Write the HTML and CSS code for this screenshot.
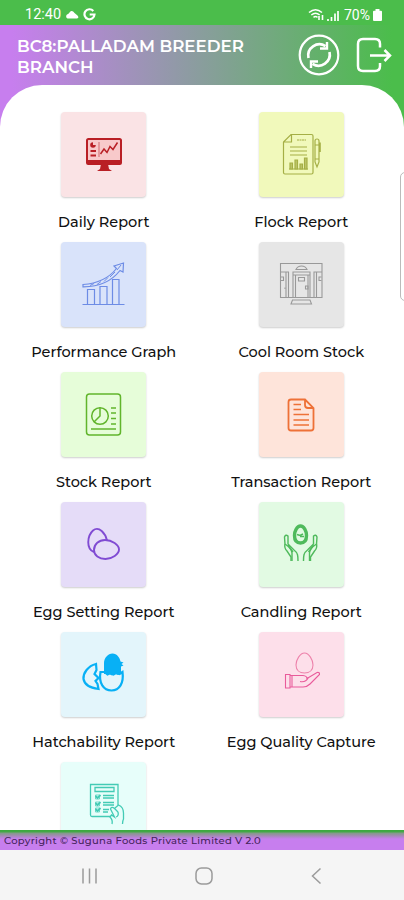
FILE: index.html
```html
<!DOCTYPE html>
<html lang="en">
<head>
	<title>Breeder Reports</title>
	<meta charset="utf-8">
	<meta name="viewport" content="width=device-width, initial-scale=1.0">
	<link rel="stylesheet" href="styles.css">
</head>
<body>
	<div class="screen">

		<div class="status-bar">
			<span class="time">12:40</span>
			<svg class="cloud" width="14" height="9" viewBox="0 0 14 9"><path d="M2.500 8.500a2.300 2.300 0 0 1 0-4.200Q4 3.500 4.500 2.500 7-.5 9.500 3l3 2.500Q14.500 8 12 8.500z" fill="#fff"/></svg>
			<svg class="google" width="13" height="13" viewBox="0 0 13 13"><path d="M10.300 3A5 5 0 1 0 11.500 6.500H6.700" fill="none" stroke="#fff" stroke-width="2.200"/></svg>
			<svg class="signal" width="32" height="14" viewBox="0 0 32 14" fill="none" stroke="#fff" stroke-width="1.500">
				<path d="M1 4.500Q7.500-1 14 4.500M3.300 7Q7.500 3.500 11.700 7M5.500 9.300Q7.500 7.800 9.500 9.300"/>
				<path d="M11 12V8M14.500 7v5" stroke-width="1.600"/>
				<path d="M20 13v-2M23.500 13V9M27 13V5.500M30 13V3" stroke-width="1.700"/>
			</svg>
			<span class="percent">70%</span>
			<svg class="battery" width="9" height="12" viewBox="0 0 9 12"><path d="M2.500 0h4v1.700H8q1 0 1 1V11q0 1-1 1H1q-1 0-1-1V2.700q0-1 1-1h1.500z" fill="#fff"/></svg>
		</div>

		<div class="main">
			<div class="header">
				<h1 class="title">BC8:PALLADAM BREEDER BRANCH</h1>
				<svg class="refresh" width="42" height="42" viewBox="0 0 42 42" fill="none" stroke="#fff" stroke-width="2.200">
					<circle cx="21" cy="21" r="19.300"/>
					<path d="M10.500 24A11.200 11.200 0 0 1 27.500 12.200M31.500 18A11.200 11.200 0 0 1 14.500 29.800" stroke-width="2.700"/>
					<path d="M29 8v6.500h-7M13 34v-6.500h7" stroke-width="2.400"/>
				</svg>
				<svg class="logout" width="36" height="36" viewBox="0 0 36 36" fill="none" stroke="#fff" stroke-width="2.500">
					<path d="M24 10.500V7q0-5-5-5H7Q2 2 2 7v22q0 5 5 5h12q5 0 5-5v-3"/>
					<path d="M14 18.500h19M28.500 13l5.500 5.500-5.500 5.500"/>
				</svg>
			</div>

			<div class="panel">
				<div class="grid">

					<a class="item">
						<div class="tile daily">
							<svg viewBox="0 0 85 85">
								<rect x="26" y="27" width="34" height="25" rx="1.500" fill="#f8c9ca" stroke="#b91f25" stroke-width="2"/>
								<path d="M26 48h34v3q0 1.500-1.500 1.500h-31Q26 52.500 26 51zM40 52h7l1 5 3 2H36l3-2z" fill="#b91f25"/>
								<circle cx="32" cy="33" r="2.800" fill="#b91f25"/>
								<path d="M32 33V30h3v3z" fill="#f8c9ca"/>
								<path d="M29.500 39H35M29.500 43.500H35" stroke="#b91f25" stroke-width="2"/>
								<path d="M38 30v15" stroke="#cf686c" stroke-width="1"/>
								<path d="M39.500 42l3.500-5 3 3.500 3-6 3 3 4.500-7" stroke="#b91f25" stroke-width="1.500" fill="none"/>
							</svg>
						</div>
						<span class="label">Daily Report</span>
					</a>

					<a class="item">
						<div class="tile flock">
							<svg viewBox="0 0 85 85" fill="none" stroke="#a5af45" stroke-width="1.200">
								<path d="M32 22.500H52.500q1.500 0 1.500 1.500v36.500q0 1.500-1.500 1.500H26q-1.500 0-1.500-1.500V30zM32.500 22.500V30H24.500"/>
								<path d="M38 28h9" stroke-dasharray="2 .5"/>
								<path d="M31 35h17M31 39h17M31 43h17"/>
								<path d="M30 57h19"/>
								<path d="M31 51h2.500v6H31zM36 48h2.500v9H36zM41 52h2.500v5H41zM45.500 46H48v11h-2.500z" fill="#bdc56a"/>
								<path d="M56 29q0-2 2-2t2 2v21l-2 5-2-5zM56 33h4M56 47h4M60 31h1.200v9"/>
							</svg>
						</div>
						<span class="label">Flock Report</span>
					</a>

					<a class="item">
						<div class="tile performance">
							<svg viewBox="0 0 85 85" fill="none" stroke="#6d8ce5" stroke-width="1.200">
								<path d="M21.500 62.500h42"/>
								<path d="M26.500 62V47.500h7V62M39 62V44.500h7V62M51.500 62V37.500H58V62"/>
								<path d="M22 42.500Q44 41 55.500 26.500L53 24l9.500-3-.5 9-3-1.500Q46 45 22 44.800z"/>
								<path d="M29 43.500l4-2M36 42.500l4-3M43 39.500l4-4M49 35l5-5M56 28l4-5" stroke-width="1"/>
							</svg>
						</div>
						<span class="label">Performance Graph</span>
					</a>

					<a class="item">
						<div class="tile cool">
							<svg viewBox="0 0 85 85" fill="none" stroke="#999" stroke-width="1.100">
								<path d="M21.500 21.500h41.500v34H21.500zM21.500 30h8v25.500M63 30h-8v25.500M27 30v25M57.500 30v25"/>
								<path d="M34 55.500V30h17v25.500M36.500 55V33H49v22M34 30h17v3H34z"/>
								<path d="M37 27.500q1.500-3.500 5.500-3.500t5.500 3.500z"/>
								<path d="M39.500 35.500h6v3.500h-6zM46.500 44H49v3h-2.500zM22 35h2.500v3.500H22M62.500 35H60v3.500h2.500M26 45.500v1.500"/>
								<path d="M33.500 58H51l1.500 4H32z"/>
							</svg>
						</div>
						<span class="label">Cool Room Stock</span>
					</a>

					<a class="item">
						<div class="tile stock">
							<svg viewBox="0 0 85 85" fill="none" stroke="#61b52c" stroke-width="1.500">
								<rect x="25.500" y="22" width="34" height="41" rx="3"/>
								<circle cx="39" cy="44" r="8.300"/>
								<path d="M39 35.500V44l-6 6"/>
								<path d="M50 36h5M50 41h5M50 46.500h5M50 52h5M30 57h25"/>
							</svg>
						</div>
						<span class="label">Stock Report</span>
					</a>

					<a class="item">
						<div class="tile transaction">
							<svg viewBox="0 0 85 85" fill="none" stroke="#ee7137" stroke-width="1.800">
								<path d="M46 27.500H32q-2.500 0-2.500 2.500v26q0 2.500 2.500 2.500h20q2.500 0 2.500-2.500V36zM46 27.500V33q0 3 3 3h5.500"/>
								<path d="M34.500 32.500H42M34.500 37.500H42M34.500 42.500h15.500M34.500 48h15.500M34.500 53h15.500" stroke-width="1.600"/>
							</svg>
						</div>
						<span class="label">Transaction Report</span>
					</a>

					<a class="item">
						<div class="tile setting">
							<svg viewBox="0 0 85 85" fill="none" stroke="#804bd3" stroke-width="1.900">
								<path d="M33 50C25 47 26 34 32 28.500c6-5 12.500 3 14 10"/>
								<path d="M33 48c0-6 5-10 11-10 7 0 14 5 14 9.500S51 57 44.500 57C38 57 33 53.500 33 48z"/>
							</svg>
						</div>
						<span class="label">Egg Setting Report</span>
					</a>

					<a class="item">
						<div class="tile candling">
							<svg viewBox="0 0 85 85" fill="none" stroke="#4fba5c" stroke-width="1.400">
								<path d="M41.500 24c3.500 0 6 5 6 9.500s-2 7.500-6 7.500-6-3-6-7.500 2.500-9.500 6-9.500z" stroke-width="3.400"/>
								<path d="M38 32.500l3 1 3-1.500M41 34.500h4" stroke-width="1.600"/>
								<path d="M33 59V51c-.5-4-4-7-7-9l-.5-7q1-3 3.500-1v8l6 6c4 3 4 6 4 11"/>
								<path d="M50.500 59V51c.5-4 4-7 7-9l.5-7q-1-3-3.500-1v8l-6 6c-4 3-4 6-4 11"/>
								<path d="M26 42q-1 4 2 7l4 6v4M57.500 42q1 4-2 7l-4 6v4M29 43l5 7M54.500 43l-5 7"/>
							</svg>
						</div>
						<span class="label">Candling Report</span>
					</a>

					<a class="item">
						<div class="tile hatch">
							<svg viewBox="0 0 85 85" fill="none" stroke="#08b0f5" stroke-width="2.200">
								<path d="M35 32C27 34 22 41 22.500 47c1 6 8 9 15 10l-1-5-2-3 3-3-4-4 2-4z"/>
								<path d="M43 42V31c0-5 4-9.500 8.500-9.500S59 26 59.500 29.500l3 1-2 1.500 2 1.500-2.500 1V42l-3 1-3-1-3 1.500-3-1.500z" fill="#08b0f5" stroke="none"/>
								<path d="M39.500 40c-2 11 3 18.500 11 18.500S63 51 61.500 40l-3 2-3-1.500-3 2-3-1.500-3 1.500-3-2.500z"/>
							</svg>
						</div>
						<span class="label">Hatchability Report</span>
					</a>

					<a class="item">
						<div class="tile quality">
							<svg viewBox="0 0 85 85" fill="none" stroke="#e95b9b" stroke-width="1.100">
								<path d="M45.500 21C50 21 54 28 54 33s-3.500 8-8.500 8-8.500-3-8.500-8 4-12 8.500-12z" stroke="#ed82ab"/>
								<path d="M26.500 42.500H31V56h-4.500zM31 43.500h13q4 .5 4 3l10-6q3-.5 2.500 2L51 52q-3 3-7 3H31M33 43.500V55"/>
								<path d="M41 49.500q6 1 8-3.500"/>
							</svg>
						</div>
						<span class="label">Egg Quality Capture</span>
					</a>

					<a class="item">
						<div class="tile checklist">
							<svg viewBox="0 0 85 85" fill="none" stroke="#43cbb5" stroke-width="1.300">
								<path d="M49 54.500H31q-1.500 0-1.500-1.500V22.500H57V43"/>
								<path d="M34 25.500h19v4H34z"/>
								<path d="M34.500 34l2 2 3-3M34.500 41l2 2 3-3M34.500 47l2 2 3-3" stroke-width="1.800"/>
								<path d="M34.500 33h4v4h-4zM34.500 40h4v4h-4zM34.500 46h4v4h-4z" stroke-width=".7"/>
								<path d="M42 33.500h11M42 36h11M42 40.500h11M42 43h11M42 47.500h6M42 50h5"/>
								<path d="M51 62q1-4-2-7l1.500-2 3 2-4-8q1-3 4-.5l4-3.500q5 2 5 8v6q-1 2-1 5M53.500 46.500L57 50M55 55q3-1 2-5"/>
							</svg>
						</div>
					</a>

				</div>
			</div>
			<div class="edge-handle"></div>
		</div>

		<div class="footer">Copyright © Suguna Foods Private Limited V 2.0</div>

		<div class="nav-bar">
			<svg width="18" height="18" viewBox="0 0 18 18" fill="none" stroke="#9b9b9b" stroke-width="1.500"><path d="M2 1.500v15M8.500 1.500v15M15 1.500v15"/></svg>
			<svg width="20" height="20" viewBox="0 0 20 20" fill="none" stroke="#9b9b9b" stroke-width="1.500"><rect x="2" y="2" width="16" height="16" rx="5.500"/></svg>
			<svg width="18" height="18" viewBox="0 0 18 18" fill="none" stroke="#9b9b9b" stroke-width="1.500"><path d="M12.500 1.500L4.500 9l8 7.500"/></svg>
		</div>

	</div>
</body>
</html>
```

FILE: styles.css
```css
*,*::after,*::before{
	box-sizing: border-box;
	margin: 0;
	padding: 0;
}

body{
	font-family: 'Montserrat', 'Inter', sans-serif;
	background-color: white;
}

.screen{
	width: 100%;
	height: 100vh;
	display: flex;
	flex-direction: column;
	overflow: hidden;
}

/* status bar */
.status-bar{
	height: 25px;
	flex: none;
	padding: 4px 22px 0 25px;
	display: flex;
	align-items: center;
	background-color: #4bbd4b;
	color: white;
	font-family: Roboto, sans-serif;
	font-size: 14.5px;
}

.cloud{
	margin-left: 4px;
}

.google{
	margin-left: 4px;
}

.signal{
	margin-left: auto;
}

.percent{
	margin-left: 4px;
	font-size: 14px;
}

.battery{
	margin-left: 3px;
}

/* header and menu */
.main{
	position: relative;
	flex: 1;
	min-height: 0;
	display: flex;
	flex-direction: column;
	background: linear-gradient(to right, #c77eee 0%, #c77eee 3%, #4bbd4b 97%);
}

.header{
	height: 60px;
	flex: none;
	padding: 0 12px 0 17px;
	display: flex;
	align-items: center;
}

.title{
	flex: 1;
	color: white;
	font-size: 16.7px;
	font-weight: 600;
	line-height: 21px;
	padding-top: 3px;
}

.refresh{
	margin-right: 16px;
}

.panel{
	flex: 1;
	min-height: 0;
	overflow: hidden;
	background-color: white;
	border-radius: 42px 42px 0 0;
	padding: 27px 4px 0 5px;
}

.grid{
	display: grid;
	grid-template-columns: repeat(2, 1fr);
	grid-auto-rows: 130.100px;
}

.item{
	display: flex;
	flex-direction: column;
	align-items: center;
}

.tile{
	width: 85px;
	height: 85px;
	flex: none;
	border-radius: 4px;
	box-shadow: 0 1px 2px rgba(0, 0, 0, 0.2);
}

.tile svg{
	display: block;
	width: 85px;
	height: 85px;
}

.daily{ background-color: #fae3e5; }
.flock{ background-color: #f1f9bb; }
.performance{ background-color: #d9e3fa; }
.cool{ background-color: #e6e6e6; }
.stock{ background-color: #e6fdd9; }
.transaction{ background-color: #fee4da; }
.setting{ background-color: #e5dcf8; }
.candling{ background-color: #e2fae3; }
.hatch{ background-color: #e3f5fb; }
.quality{ background-color: #fddfea; }
.checklist{ background-color: #e7fefa; }

.label{
	margin-top: 15px;
	font-size: 14.5px;
	font-weight: 500;
	line-height: 20px;
	white-space: nowrap;
	color: #111;
}

.edge-handle{
	position: absolute;
	right: -8px;
	top: 147px;
	width: 12px;
	height: 129px;
	border: 1px solid #bbb;
	border-radius: 5px;
	background-color: white;
}

/* bottom */
.footer{
	height: 20px;
	flex: none;
	padding-left: 4px;
	background: linear-gradient(#39a93c 0, #45a748 2px, #829c88 3px, #9b8da8 5px, #c77eee 9px);
	color: #45235a;
	font-size: 10px;
	font-weight: 500;
	line-height: 21px;
	letter-spacing: 0.3px;
}

.nav-bar{
	height: 50px;
	flex: none;
	padding: 2px 78px 0 81px;
	display: flex;
	align-items: center;
	justify-content: space-between;
	background-color: #f5f5f5;
}
```
